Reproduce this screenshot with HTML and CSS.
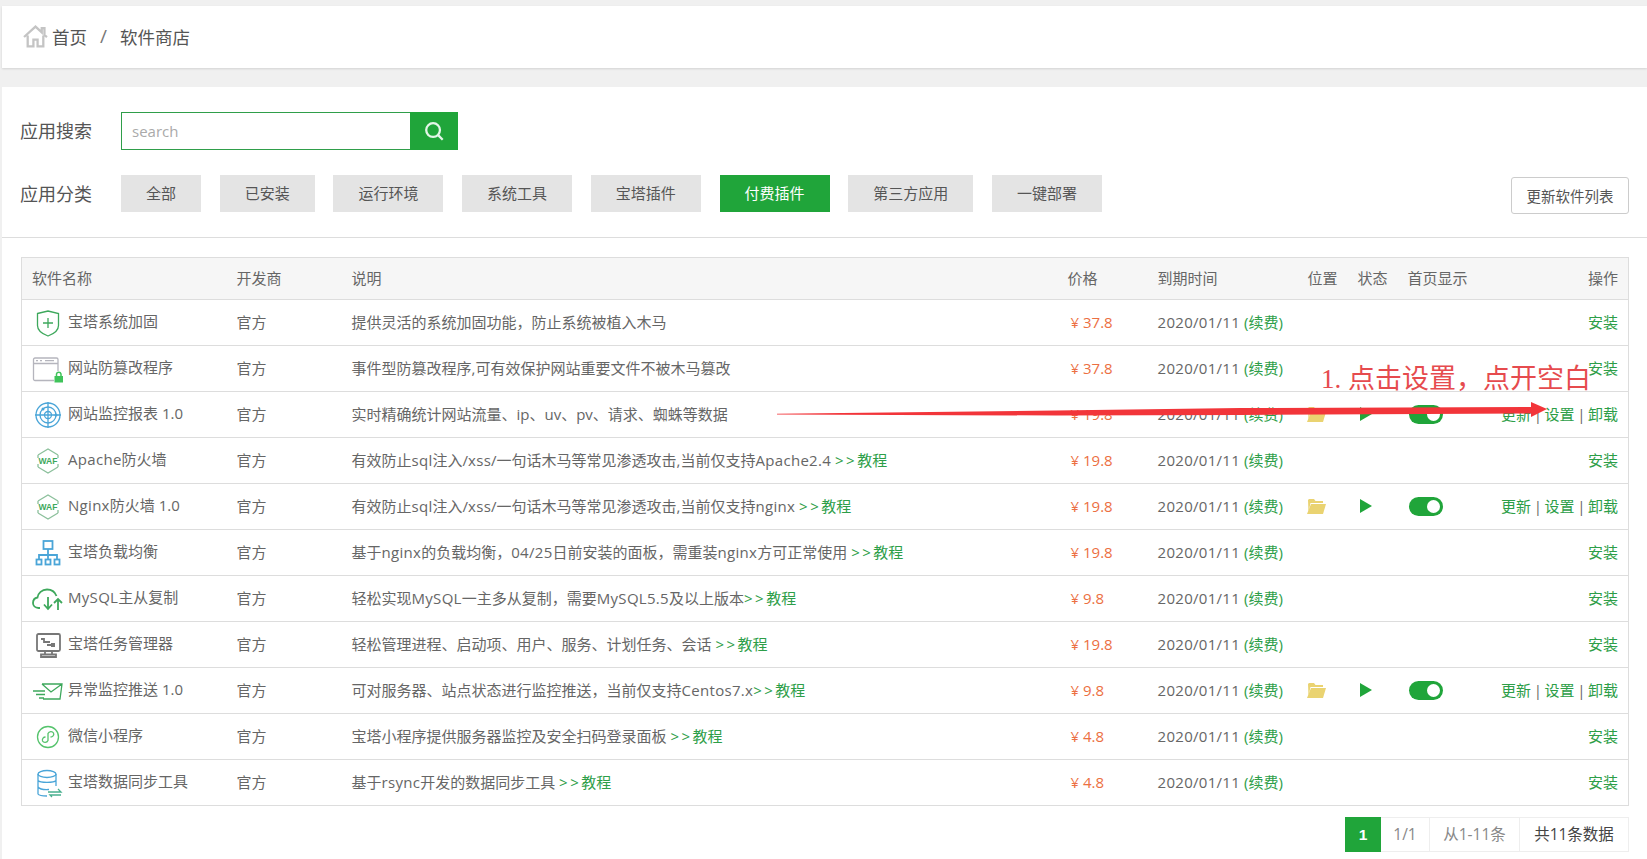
FILE: index.html
```html
<!DOCTYPE html>
<html lang="zh-CN">
<head>
  <meta charset="UTF-8">
  <title>软件商店</title>
  <link rel="stylesheet" href="styles.css">
</head>
<body>
  <div class="crumbs">
    <svg class="home-icon" viewBox="0 0 24 24"><path d="M1 12.500 12 2.500l6 5.600V4h2.600v6.600l2.400 2M4.500 11v10.500h5.500v-6.500h4v6.500h5.500V11"/></svg>
    <span>首页</span>
    <span class="crumb-sep">/</span>
    <span>软件商店</span>
  </div>

  <div class="main-card">
    <div class="filters">
      <div class="filter-row search-row">
        <span class="filter-label">应用搜索</span>
        <div class="search-box">
          <input type="text" placeholder="search">
          <button class="search-btn"><svg viewBox="0 0 24 24"><circle cx="11" cy="11" r="7.500"/><path d="m16.500 16.500 5 5"/></svg></button>
        </div>
      </div>
      <div class="filter-row">
        <span class="filter-label">应用分类</span>
        <div class="tabs">
          <span class="tab">全部</span>
          <span class="tab">已安装</span>
          <span class="tab">运行环境</span>
          <span class="tab">系统工具</span>
          <span class="tab">宝塔插件</span>
          <span class="tab active">付费插件</span>
          <span class="tab">第三方应用</span>
          <span class="tab">一键部署</span>
        </div>
        <button class="refresh-btn">更新软件列表</button>
      </div>
    </div>

    <div class="table-wrap">
      <table class="soft-table">
        <colgroup>
          <col class="c-name"><col class="c-dev"><col class="c-desc"><col class="c-price"><col class="c-exp"><col class="c-pos"><col class="c-state"><col class="c-home"><col>
        </colgroup>
        <thead>
          <tr><th>软件名称</th><th>开发商</th><th>说明</th><th>价格</th><th>到期时间</th><th>位置</th><th>状态</th><th>首页显示</th><th class="ops">操作</th></tr>
        </thead>
        <tbody>
          <tr>
            <td><div class="soft-name"><svg class="soft-icon green" viewBox="0 0 32 32"><path d="M5.500 6.500 16 4l10.500 2.500v12c0 5-5 8.500-10.500 10.500C10.500 27 5.500 23.500 5.500 18.500z"/><path d="M16 11v10M11 16h10"/></svg><span>宝塔系统加固</span></div></td>
            <td>官方</td><td>提供灵活的系统加固功能，防止系统被植入木马</td>
            <td class="price">¥ 37.8</td><td><span class="lat">2020/01/11</span> <a class="link">(续费)</a></td><td></td><td></td><td></td>
            <td class="ops"><a class="link">安装</a></td>
          </tr>
          <tr>
            <td><div class="soft-name"><svg class="soft-icon grey" viewBox="0 0 32 32"><path d="M22 27.500H3A1.500 1.500 0 0 1 1.500 26V6.500A1.500 1.500 0 0 1 3 5h21.500A1.500 1.500 0 0 1 26 6.500V18"/><path d="M1.500 10.500H26M4 7.700h2M8 7.700h2M13 7.700h9"/><rect class="lock" x="22.500" y="23" width="8.500" height="6.500"/><path class="lock-top" d="M24.500 23v-2a2.300 2.300 0 0 1 4.500 0v2"/></svg><span>网站防篡改程序</span></div></td>
            <td>官方</td><td>事件型防篡改程序,可有效保护网站重要文件不被木马篡改</td>
            <td class="price">¥ 37.8</td><td><span class="lat">2020/01/11</span> <a class="link">(续费)</a></td><td></td><td></td><td></td>
            <td class="ops"><a class="link">安装</a></td>
          </tr>
          <tr>
            <td><div class="soft-name"><svg class="soft-icon blue" viewBox="0 0 32 32"><circle cx="16" cy="16" r="12"/><circle cx="16" cy="16" r="8"/><circle cx="16" cy="16" r="3.500"/><path d="M16 3v26M3 16h26"/><circle class="dot" cx="11" cy="10" r="1.500"/><circle class="dot" cx="24" cy="16" r="1.500"/></svg><span>网站监控报表 1.0</span></div></td>
            <td>官方</td><td>实时精确统计网站流量、ip、uv、pv、请求、蜘蛛等数据</td>
            <td class="price">¥ 19.8</td><td><span class="lat">2020/01/11</span> <a class="link">(续费)</a></td>
            <td><svg class="folder" viewBox="0 0 19 15"><path d="M2 0h5l1.500 2H16v2H3.500L1.500 13 1 1z"/><path d="M4 5h15l-3 10H0z"/></svg></td>
            <td><span class="play"></span></td>
            <td><span class="toggle"></span></td>
            <td class="ops"><a class="link">更新</a> | <a class="link">设置</a> | <a class="link">卸载</a></td>
          </tr>
          <tr>
            <td><div class="soft-name"><svg class="soft-icon waf" viewBox="0 0 32 32"><path d="M6 10 16 4l10 6M6 22l10 6 10-6M6 10v3M26 10v3M6 19v3M26 19v3"/><text x="16" y="19">WAF</text></svg><span><span class="lat">Apache</span>防火墙</span></div></td>
            <td>官方</td><td>有效防止<span class="lat">sql</span>注入/<span class="lat">xss</span>/一句话木马等常见渗透攻击,当前仅支持<span class="lat">Apache2.4</span> <a class="link"><span class="arrows">&gt;&gt;</span>教程</a></td>
            <td class="price">¥ 19.8</td><td><span class="lat">2020/01/11</span> <a class="link">(续费)</a></td><td></td><td></td><td></td>
            <td class="ops"><a class="link">安装</a></td>
          </tr>
          <tr>
            <td><div class="soft-name"><svg class="soft-icon waf" viewBox="0 0 32 32"><path d="M6 10 16 4l10 6M6 22l10 6 10-6M6 10v3M26 10v3M6 19v3M26 19v3"/><text x="16" y="19">WAF</text></svg><span><span class="lat">Nginx</span>防火墙 1.0</span></div></td>
            <td>官方</td><td>有效防止<span class="lat">sql</span>注入/<span class="lat">xss</span>/一句话木马等常见渗透攻击,当前仅支持<span class="lat">nginx</span> <a class="link"><span class="arrows">&gt;&gt;</span>教程</a></td>
            <td class="price">¥ 19.8</td><td><span class="lat">2020/01/11</span> <a class="link">(续费)</a></td>
            <td><svg class="folder" viewBox="0 0 19 15"><path d="M2 0h5l1.500 2H16v2H3.500L1.500 13 1 1z"/><path d="M4 5h15l-3 10H0z"/></svg></td>
            <td><span class="play"></span></td>
            <td><span class="toggle"></span></td>
            <td class="ops"><a class="link">更新</a> | <a class="link">设置</a> | <a class="link">卸载</a></td>
          </tr>
          <tr>
            <td><div class="soft-name"><svg class="soft-icon blue thick" viewBox="0 0 32 32"><rect x="11.500" y="4" width="9" height="8"/><path d="M16 12v6M7 22v-4h18v4M16 18v4"/><rect x="4.500" y="22.500" width="5" height="5"/><rect x="13.500" y="22.500" width="5" height="5"/><rect x="22.500" y="22.500" width="5" height="5"/></svg><span>宝塔负载均衡</span></div></td>
            <td>官方</td><td>基于<span class="lat">nginx</span>的负载均衡，<span class="lat">04/25</span>日前安装的面板，需重装<span class="lat">nginx</span>方可正常使用 <a class="link"><span class="arrows">&gt;&gt;</span>教程</a></td>
            <td class="price">¥ 19.8</td><td><span class="lat">2020/01/11</span> <a class="link">(续费)</a></td><td></td><td></td><td></td>
            <td class="ops"><a class="link">安装</a></td>
          </tr>
          <tr>
            <td><div class="soft-name"><svg class="soft-icon green thick" viewBox="0 0 32 32"><path d="M8 25H6.500C3 25 1 22.500 1 20c0-3 2-5 4.500-5.500C6 10 10 6.500 15 6.500c4.500 0 8 2.500 9.500 6.500"/><path d="M16 14v12M12 21.500l4 4.500 4-4.500M26 27V16M22 20l4-4 4 4"/></svg><span><span class="lat">MySQL</span>主从复制</span></div></td>
            <td>官方</td><td>轻松实现<span class="lat">MySQL</span>一主多从复制，需要<span class="lat">MySQL5.5</span>及以上版本<a class="link"><span class="arrows">&gt;&gt;</span>教程</a></td>
            <td class="price">¥ 9.8</td><td><span class="lat">2020/01/11</span> <a class="link">(续费)</a></td><td></td><td></td><td></td>
            <td class="ops"><a class="link">安装</a></td>
          </tr>
          <tr>
            <td><div class="soft-name"><svg class="soft-icon dark thick" viewBox="0 0 32 32"><rect x="5" y="5" width="23" height="17" rx="1.500"/><path d="M9 10h3v3h6M15 16h5M13 22v3M20 22v3M9 28h15v-2.500H9z"/><rect class="dark-dot" x="19" y="14" width="4" height="4"/></svg><span>宝塔任务管理器</span></div></td>
            <td>官方</td><td>轻松管理进程、启动项、用户、服务、计划任务、会话 <a class="link"><span class="arrows">&gt;&gt;</span>教程</a></td>
            <td class="price">¥ 19.8</td><td><span class="lat">2020/01/11</span> <a class="link">(续费)</a></td><td></td><td></td><td></td>
            <td class="ops"><a class="link">安装</a></td>
          </tr>
          <tr>
            <td><div class="soft-name"><svg class="soft-icon green" viewBox="0 0 32 32"><path d="M10 9h20l-2 15H11M10 9l9 8 11-8M1 16h12M4 19.500h9M7 23h5"/></svg><span>异常监控推送 1.0</span></div></td>
            <td>官方</td><td>可对服务器、站点状态进行监控推送，当前仅支持<span class="lat">Centos7.x</span><a class="link"><span class="arrows">&gt;&gt;</span>教程</a></td>
            <td class="price">¥ 9.8</td><td><span class="lat">2020/01/11</span> <a class="link">(续费)</a></td>
            <td><svg class="folder" viewBox="0 0 19 15"><path d="M2 0h5l1.500 2H16v2H3.500L1.500 13 1 1z"/><path d="M4 5h15l-3 10H0z"/></svg></td>
            <td><span class="play"></span></td>
            <td><span class="toggle"></span></td>
            <td class="ops"><a class="link">更新</a> | <a class="link">设置</a> | <a class="link">卸载</a></td>
          </tr>
          <tr>
            <td><div class="soft-name"><svg class="soft-icon mint" viewBox="0 0 32 32"><circle cx="16" cy="16" r="10.500"/><path d="M10.500 20c1 2 4.500 2 5.500-.5v-7c1-2.500 4.500-2.500 5.500-.5 1 2.500-1 4-3 4M13.500 16c-2 0-3.500 1.500-3 4"/></svg><span>微信小程序</span></div></td>
            <td>官方</td><td>宝塔小程序提供服务器监控及安全扫码登录面板 <a class="link"><span class="arrows">&gt;&gt;</span>教程</a></td>
            <td class="price">¥ 4.8</td><td><span class="lat">2020/01/11</span> <a class="link">(续费)</a></td><td></td><td></td><td></td>
            <td class="ops"><a class="link">安装</a></td>
          </tr>
          <tr>
            <td><div class="soft-name"><svg class="soft-icon blue" viewBox="0 0 32 32"><ellipse cx="15" cy="7" rx="9" ry="3.500"/><path d="M6 7v20c1 1.500 4 2 9 2M24 7v12M6 13.500c2 2.500 16 2.500 18 0M6 20c2 2.500 7 2.800 11 2.500"/><path class="teal" d="M16 25h13l-3-3M29 28H18l2 2"/></svg><span>宝塔数据同步工具</span></div></td>
            <td>官方</td><td>基于<span class="lat">rsync</span>开发的数据同步工具 <a class="link"><span class="arrows">&gt;&gt;</span>教程</a></td>
            <td class="price">¥ 4.8</td><td><span class="lat">2020/01/11</span> <a class="link">(续费)</a></td><td></td><td></td><td></td>
            <td class="ops"><a class="link">安装</a></td>
          </tr>
        </tbody>
      </table>

      <div class="pager">
        <span class="page-cell page-now">1</span>
        <span class="page-cell page-count">1/1</span>
        <span class="page-cell page-range">从1-11条</span>
        <span class="page-cell page-total">共11条数据</span>
      </div>
    </div>
  </div>

  <!-- annotation drawn on top of the screenshot -->
  <div class="note-text">1. 点击设置，点开空白</div>
  <svg class="note-arrow" viewBox="0 0 780 24"><path d="M1 15.700 280 12.500l184-2.500 291-1V4l16 7-16 8v-3.500L464 17l-184 .5L1 16.600z"/></svg>
</body>
</html>
```
FILE: styles.css
```css
* {
  box-sizing: border-box;
}
html, body {
  margin: 0;
  height: 859px;
  overflow: hidden;
}
body {
  background: #f0f0f0;
  padding: 6px 0 0 2px;
  font-family: "Open Sans", "Noto Sans CJK SC", sans-serif;
  font-size: 15px;
  color: #666;
}
.crumbs {
  display: flex;
  align-items: center;
  height: 62px;
  padding: 0 0 2px 21px;
  background: #fff;
  box-shadow: 0 1px 2px rgba(0, 0, 0, .12);
  font-size: 17.500px;
  color: #555;
}
.home-icon {
  width: 25px;
  height: 25px;
  margin-right: 4px;
  fill: none;
  stroke: #c4c4c4;
  stroke-width: 2.200;
}
.crumb-sep {
  margin: 0 13px;
  color: #777;
  font-size: 19px;
}
.main-card {
  margin-top: 19px;
  height: 772px;
  background: #fff;
}
.filters {
  height: 151px;
  padding-top: 25px;
  border-bottom: 1px solid #ddd;
}
.filter-row {
  display: flex;
  align-items: center;
  height: 37px;
  padding: 0 18px 0 18px;
}
.search-row {
  height: 38px;
  margin-bottom: 25px;
}
.filter-label {
  width: 101px;
  padding-bottom: 2px;
  font-size: 18px;
  color: #555;
}
.search-box {
  display: flex;
  width: 337px;
  height: 38px;
}
.search-box input {
  flex: 1;
  min-width: 0;
  border: 1px solid #2f9e4a;
  border-right: 0;
  padding: 0 10px;
  font: inherit;
  outline: none;
}
.search-box input::placeholder {
  color: #aaa;
}
.search-btn {
  display: flex;
  align-items: center;
  justify-content: center;
  width: 48px;
  border: 0;
  padding: 0;
  background: #20a53a;
}
.search-btn svg {
  width: 22px;
  height: 22px;
  fill: none;
  stroke: #e4f6e8;
  stroke-width: 2.500;
}
.tabs {
  display: flex;
  gap: 18.700px;
  flex: 1;
}
.tab {
  height: 37px;
  line-height: 36px;
  padding: 0 25px;
  background: #e4e4e4;
  color: #555;
}
.tab.active {
  background: #20a53a;
  color: #fff;
}
.refresh-btn {
  width: 118px;
  height: 37px;
  margin-top: 3px;
  border: 1px solid #ccc;
  border-radius: 3px;
  padding: 0;
  background: #fff;
  font: inherit;
  font-size: 14.500px;
  color: #555;
}
.table-wrap {
  padding: 19px 18px 0 19px;
}
.soft-table {
  width: 100%;
  table-layout: fixed;
  border-collapse: collapse;
  border: 1px solid #ddd;
}
.c-name { width: 205px; }
.c-dev { width: 115px; }
.c-desc { width: 716px; }
.c-price { width: 90px; }
.c-exp { width: 150px; }
.c-pos, .c-state { width: 50px; }
.c-home { width: 83px; }
.soft-table th, .soft-table td {
  padding: 0 0 2px 10px;
  text-align: left;
  font-weight: 400;
  white-space: nowrap;
}
.soft-table th {
  height: 42px;
  background: #f6f6f6;
}
.soft-table td {
  height: 46px;
  border-top: 1px solid #ddd;
}
.soft-table td:first-child {
  padding-bottom: 0;
}
.soft-table .ops {
  padding-right: 10px;
  text-align: right;
  word-spacing: -1.300px;
}
.soft-name {
  display: flex;
  align-items: center;
}
.soft-name > span {
  margin: 0 0 5px 4px;
}
.soft-icon {
  flex: none;
  width: 32px;
  height: 32px;
  fill: none;
  stroke-width: 1.300;
}
.lat {
  letter-spacing: .3px;
}
.arrows {
  letter-spacing: 2.500px;
}
.green { stroke: #3ea85c; }
.grey { stroke: #b5b5bd; }
.blue { stroke: #4aa5d8; }
.mint { stroke: #55c36c; }
.dark { stroke: #777; }
.thick { stroke-width: 1.800; }
.dot { fill: #4aa5d8; stroke: none; }
.dark-dot { fill: #777; stroke: none; }
.teal { stroke: #48b08e; }
.lock { fill: #3fc35a; stroke: none; }
.lock-top { stroke: #3fc35a; stroke-width: 1.500; }
.waf { stroke: #8cc09c; }
.waf text {
  fill: #3ea85c;
  stroke: none;
  font-family: "Liberation Sans", sans-serif;
  font-size: 8.500px;
  font-weight: 700;
  text-anchor: middle;
}
.soft-table .price {
  padding-left: 13px;
  color: #ec6f42;
}
.link {
  color: #2d9e48;
}
.folder {
  display: block;
  width: 19px;
  height: 15px;
  margin: 1px 0 0 -1px;
  fill: #ead371;
}
.play {
  display: block;
  width: 0;
  height: 0;
  margin: 1px 0 0 2px;
  border-left: 12px solid #20a53a;
  border-top: 7px solid transparent;
  border-bottom: 7px solid transparent;
}
.toggle {
  display: block;
  position: relative;
  width: 34px;
  height: 19px;
  margin: 1px 0 0 1px;
  border-radius: 10px;
  background: #20a53a;
}
/* knob sits over the track */
.toggle::after {
  content: "";
  position: absolute;
  top: 3px;
  right: 3px;
  width: 13px;
  height: 13px;
  border-radius: 50%;
  background: #fff;
}
.pager {
  display: flex;
  justify-content: flex-end;
  margin-top: 11px;
}
.page-cell {
  height: 35px;
  line-height: 33px;
  border: 1px solid #eee;
  border-left: 0;
  text-align: center;
  font-size: 15.500px;
  color: #888;
}
.page-now {
  width: 36px;
  border: 0;
  line-height: 35px;
  background: #20a53a;
  color: #fff;
  font-family: "Liberation Sans", sans-serif;
  font-weight: 700;
}
.page-count { width: 49px; }
.page-range { width: 90px; }
.page-total { width: 109px; color: #444; }
.note-text {
  position: absolute;
  top: 361px;
  left: 1321px;
  font-family: "Liberation Serif", "Noto Sans CJK SC", serif;
  font-size: 27px;
  line-height: 36px;
  color: #e64b4e;
  white-space: nowrap;
}
.note-arrow {
  position: absolute;
  top: 398px;
  left: 776px;
  width: 780px;
  height: 24px;
  fill: #f2353a;
}
```
